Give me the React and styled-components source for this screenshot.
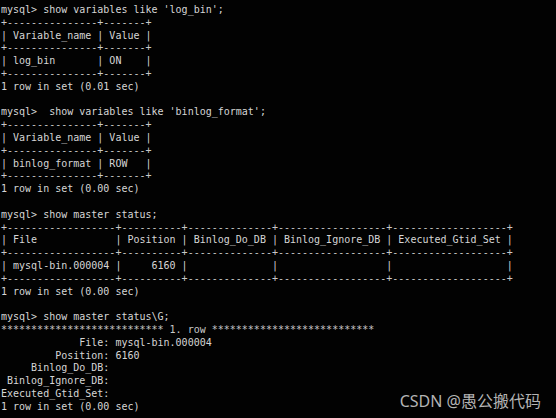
import React from "react";
import styled, { createGlobalStyle } from "styled-components";

const Global = createGlobalStyle`
  html, body { margin: 0; padding: 0; background: #000; }
  #root { width: 556px; height: 418px; }
`;

const Screen = styled.div`
  position: relative;
  width: 556px;
  height: 418px;
  background: #020202;
  overflow: hidden;
  box-sizing: border-box;
  padding: 4px 0 0 1px;
`;

const Output = styled.div`
  display: flex;
  flex-direction: column;
  font-family: "DejaVu Sans Mono", "Liberation Mono", monospace;
  font-size: 10px;
  line-height: 12.8px;
  color: #d6d6d6;
`;

const Line = styled.div`
  white-space: pre;
  height: 12.8px;
  color: ${(p) => (p.$dim ? "#c8c8c8" : "#d6d6d6")};
`;

const Watermark = styled.div`
  position: absolute;
  right: 15px;
  bottom: 7px;
  font-family: "Noto Sans", "Noto Sans CJK SC", sans-serif;
  font-size: 16px;
  line-height: 20px;
  color: #b4b4b4;
  white-space: nowrap;
`;

const b1 = "+---------------+-------+";
const b2 =
  "+------------------+----------+--------------+------------------+-------------------+";

const lines = [
  "mysql> show variables like 'log_bin';",
  b1,
  "| Variable_name | Value |",
  b1,
  "| log_bin       | ON    |",
  b1,
  "1 row in set (0.01 sec)",
  "",
  "mysql>  show variables like 'binlog_format';",
  b1,
  "| Variable_name | Value |",
  b1,
  "| binlog_format | ROW   |",
  b1,
  "1 row in set (0.00 sec)",
  "",
  "mysql> show master status;",
  b2,
  "| File             | Position | Binlog_Do_DB | Binlog_Ignore_DB | Executed_Gtid_Set |",
  b2,
  "| mysql-bin.000004 |     6160 |              |                  |                   |",
  b2,
  "1 row in set (0.00 sec)",
  "",
  "mysql> show master status\\G;",
  "*************************** 1. row ***************************",
  "             File: mysql-bin.000004",
  "         Position: 6160",
  "     Binlog_Do_DB: ",
  " Binlog_Ignore_DB: ",
  "Executed_Gtid_Set: ",
  "1 row in set (0.00 sec)",
];

export default function App() {
  return (
    <>
      <Global />
      <Screen>
        <Output>
          {lines.map((l, i) => (
            <Line key={i} $dim={l.startsWith("+") || l.startsWith("*")}>
              {l}
            </Line>
          ))}
        </Output>
        <Watermark>CSDN @愚公搬代码</Watermark>
      </Screen>
    </>
  );
}
